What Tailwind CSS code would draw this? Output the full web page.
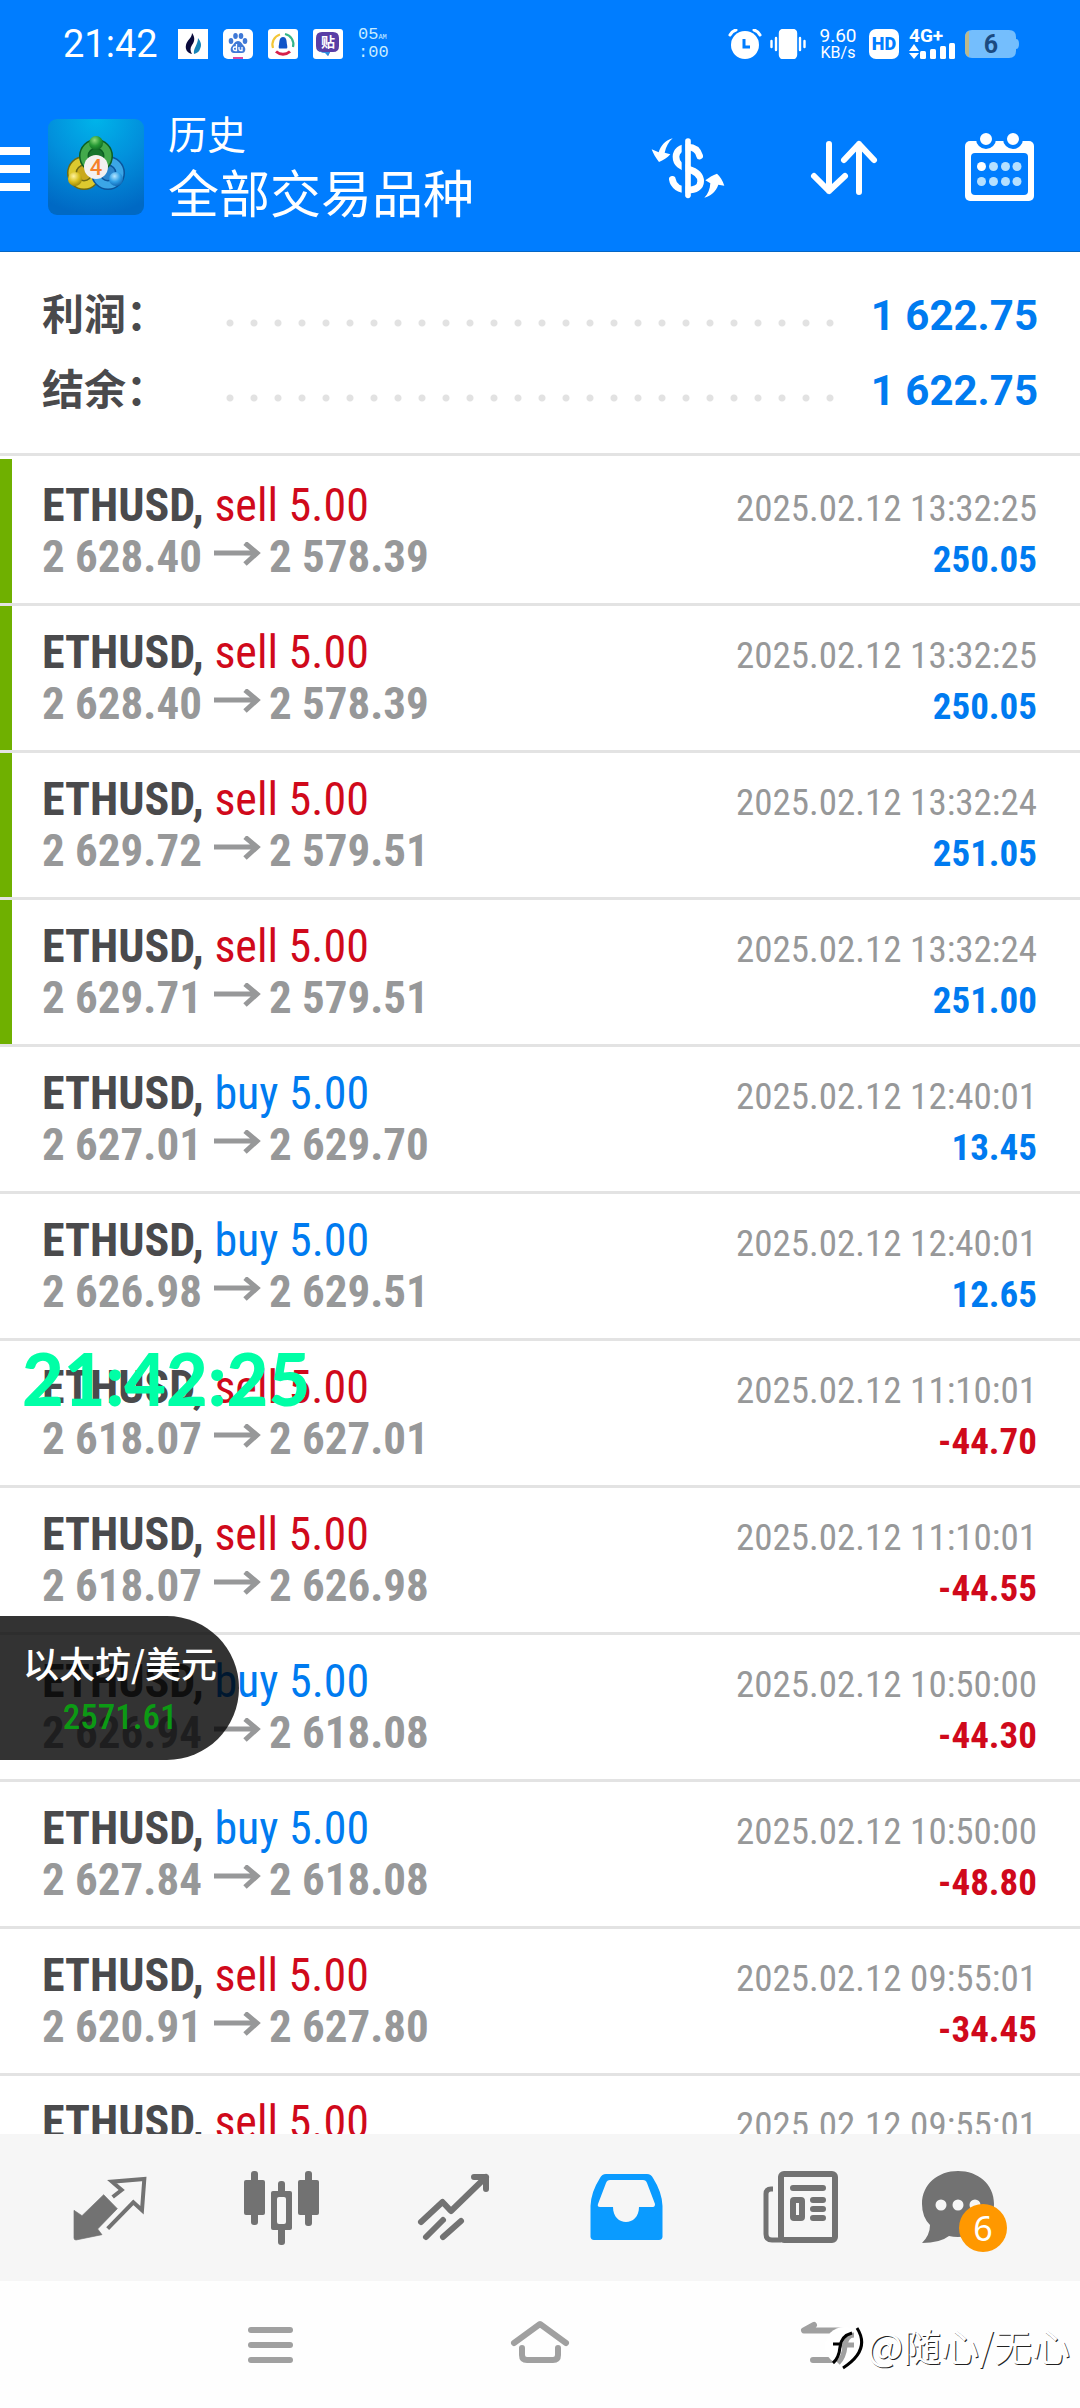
<!DOCTYPE html>
<html lang="zh-CN">
<head>
<meta charset="utf-8">
<meta name="viewport" content="width=device-width, initial-scale=1">
<title>历史 - 全部交易品种</title>
<script src="https://cdn.jsdelivr.net/npm/@tailwindcss/browser@4"></script>
</head>
<body class="relative flex h-screen flex-col overflow-hidden bg-white font-['Roboto','Noto_Sans_CJK_SC',sans-serif] text-[#4a4a4c]">

<header class="shrink-0 border-b border-[#0566c4] bg-[#007dff] text-white">
  <!-- System status bar -->
  <div class="flex h-[83px] items-center justify-between pt-1 pr-[60px] pl-[63px]">
    <div class="flex items-center gap-[15px]">
      <span class="mr-1 w-[96px] text-[38px] leading-[40px]">21:42</span>
      <svg class="size-[30px]" viewBox="0 0 30 30"><rect width="30" height="30" fill="#fff"/><path d="M14 4c3 4 3 8 0 12-2 3-2 6 0 9-5-1-7-5-6-9 1-5 6-7 6-12z" fill="#0b0b3b"/><path d="M20 9c3 4 4 7 2 11-1 3-3 4-6 5-1-6 4-9 4-16z" fill="#1684b8"/></svg>
      <svg class="size-[30px]" viewBox="0 0 30 30"><rect width="30" height="30" rx="5" fill="#fff"/><g fill="#3f78d6"><ellipse cx="8" cy="12" rx="2.300" ry="3"/><ellipse cx="12.500" cy="7" rx="2.300" ry="3"/><ellipse cx="18" cy="7" rx="2.300" ry="3"/><ellipse cx="22" cy="12" rx="2.300" ry="3"/><path d="M15 12c3 0 4 3 6 5s2 7-2 7H11c-4 0-4-5-2-7s3-5 6-5z"/></g><path d="M13.500 15v6.500h-1.500a1.500 1.500 0 0 1 0-3.500h1.500M16 18v2q0 1.500 1.500 1.500H19V18" fill="none" stroke="#fff" stroke-width="1.300"/><path d="M10 28h10v2H10z" fill="#d94aa0"/></svg>
      <svg class="size-[30px]" viewBox="0 0 30 30"><rect width="30" height="30" rx="3" fill="#fff"/><g fill="none" stroke-width="2.200"><path d="M5 19A10.500 10.500 0 0 1 12 5.500" stroke="#f3c636"/><path d="M17 5a10.500 10.500 0 0 1 8 13" stroke="#35b58a"/><path d="M8 22.500a10.500 10.500 0 0 0 14 0" stroke="#d6204b" stroke-width="3"/></g><path d="M15 8c4 0 3.500 5 4 7.500s.5 4-.5 4h-7c-1 0-1-2-.5-4S11 8 15 8z" fill="#1155c8"/></svg>
      <svg class="size-[30px]" viewBox="0 0 30 30"><rect width="30" height="30" rx="3" fill="#fff"/><path d="M9 3h11q6 0 6 6v8q0 6-6 6h-3l-2 4-2-4h-4q-6 0-6-6V9q0-6 6-6z" fill="#5a3ea6"/><path d="M5 19q1 5 7 5l3 3 2-4H9q-3-1-4-4z" fill="#2f8fe0"/><text x="15" y="18" text-anchor="middle" font-size="14" font-weight="700" fill="#fff" font-family="Noto Sans CJK SC">贴</text></svg>
      <span class="grid font-['Liberation_Mono',monospace] text-[17px] leading-[15px] text-[#c8ecff]"><span>05<small class="text-[7px]">AM</small></span><span>:00</span></span>
    </div>
    <div class="flex items-center">
      <svg class="h-[30px] w-[34px]" viewBox="0 0 34 30"><circle cx="17" cy="16" r="14" fill="#fff"/><path d="M2 6q2-4 6-5M32 6q-2-4-6-5" fill="none" stroke="#fff" stroke-width="3" stroke-linecap="round"/><path d="M16 10v8h6" fill="none" stroke="#007dff" stroke-width="3"/></svg>
      <svg class="ml-2 h-[30px] w-[36px]" viewBox="0 0 36 30" stroke="#fff" stroke-width="2.400" stroke-linecap="round"><rect x="10" y="1" width="16" height="28" rx="3" fill="#fff"/><path d="M6 9v12M1.500 12v6M30 9v12M34.500 12v6"/></svg>
      <span class="ml-3 grid w-[40px] text-center text-[19px] leading-[17px]"><span>9.60</span><span class="text-[16px]">KB/s</span></span>
      <span class="ml-[11px] grid size-[30px] place-items-center rounded-[7px] bg-white text-[18px] leading-none font-black text-[#007dff]">HD</span>
      <span class="ml-[10px] grid w-[48px]"><b class="text-[19px] leading-[15px]">4G+</b>
        <svg class="h-[17px] w-[48px]" viewBox="0 0 48 17" fill="#fff"><path d="M0 8l5-7 5 7zM0 10l5 6 5-6z"/><rect x="11" y="8" width="6" height="8" rx="1.500"/><rect x="21" y="6" width="6" height="10" rx="1.500"/><rect x="31" y="3" width="6" height="13" rx="1.500"/><rect x="40" y="0" width="6" height="16" rx="1.500"/></svg></span>
      <svg class="ml-2 h-[28px] w-[55px]" viewBox="0 0 55 28"><path d="M7 0h37q7 0 7 7v2q3 0 3 5t-3 5v2q0 7-7 7H7q-7 0-7-7V7q0-7 7-7z" fill="#74befd"/><path d="M4 1v26q-4-2-4-6V7q0-4 4-6z" fill="#bdb98c"/><text x="26" y="23" text-anchor="middle" font-size="25" font-weight="700" fill="#1b4a80" font-family="Roboto">6</text></svg>
    </div>
  </div>
  <!-- App bar -->
  <div class="flex h-[168px] items-center justify-between pr-[32px]">
    <div class="flex items-center">
      <button aria-label="菜单" class="grid w-[30px] gap-[10px] pt-1"><span class="h-2 bg-white"></span><span class="h-2 bg-white"></span><span class="h-2 bg-white"></span></button>
      <svg class="ml-[18px] size-24" viewBox="0 0 96 96" role="img" aria-label="MetaTrader 4">
        <defs>
          <radialGradient id="sky" cx=".5" cy="0" r="1"><stop offset="0" stop-color="#00b4ea"/><stop offset=".5" stop-color="#0290dc"/><stop offset="1" stop-color="#0069c4"/></radialGradient>
          <radialGradient id="gr" cx=".4" cy=".3" r=".8"><stop offset="0" stop-color="#8fdc7c"/><stop offset=".5" stop-color="#269a35"/><stop offset="1" stop-color="#0a5f1e"/></radialGradient>
          <radialGradient id="ye" cx=".4" cy=".3" r=".8"><stop offset="0" stop-color="#fff3a0"/><stop offset=".5" stop-color="#d9c01e"/><stop offset="1" stop-color="#8d7a06"/></radialGradient>
          <radialGradient id="bl" cx=".4" cy=".3" r=".8"><stop offset="0" stop-color="#b5e6ff"/><stop offset=".5" stop-color="#2f9fe6"/><stop offset="1" stop-color="#0a5aa8"/></radialGradient>
        </defs>
        <rect width="96" height="96" rx="9" fill="url(#sky)"/>
        <circle cx="36" cy="54" r="12" fill="#c9a91c" stroke="#6f6a10" stroke-width="10"/><circle cx="36" cy="54" r="12" fill="none" stroke="#dcc92f" stroke-width="7"/>
        <circle cx="60" cy="54" r="12" fill="#2c86cc" stroke="#0b559c" stroke-width="10"/><circle cx="60" cy="54" r="12" fill="none" stroke="#3ba6e6" stroke-width="7"/>
        <circle cx="48" cy="37" r="12" fill="#17752c" stroke="#0c5f22" stroke-width="10"/><circle cx="48" cy="37" r="12" fill="none" stroke="#43a94b" stroke-width="7"/>
        <circle cx="48" cy="24" r="7" fill="url(#gr)"/><circle cx="27" cy="60" r="7" fill="url(#ye)"/><circle cx="68" cy="60" r="7" fill="url(#bl)"/>
        <circle cx="48" cy="48" r="12" fill="#f3f1f0"/>
        <text x="48" y="56" text-anchor="middle" font-size="22" font-weight="500" fill="#f5812a" font-family="Roboto">4</text>
      </svg>
      <div class="ml-6 pt-1">
        <p class="text-[39px] leading-[54px]">历史</p>
        <h1 class="text-[51px] leading-[66px]">全部交易品种</h1>
      </div>
    </div>
    <div class="flex gap-[60px] pt-[2px]">
      <button aria-label="货币"><svg class="size-24" viewBox="2 0 96 96"><g transform="scale(.3333)" fill="#fff">
        <path d="M104 55C80 62 68 78 62 97L41 88C46 101 53 114 63 126 76 122 88 113 97 103L80 98C84 80 92 65 104 55Z"/>
        <path d="M199 233C218 228 234 215 241 194L259 197C254 182 246 168 237 161 225 165 212 173 202 181L217 190C216 208 210 222 199 233Z"/>
        <path d="M185 108C180 90 168 81 150 81 128 81 114 94 114 110 114 132 130 140 150 147 174 154 188 164 188 184 188 202 172 210 150 210 124 210 106 198 103 178" fill="none" stroke="#fff" stroke-width="20" stroke-linecap="round"/>
        <path d="M137 45V240" stroke="#007dff" stroke-width="12"/><path d="M150 63V226" stroke="#fff" stroke-width="17" stroke-linecap="round"/></g></svg></button>
      <button aria-label="排序"><svg class="size-24" viewBox="0 0 96 96" fill="none" stroke="#fff" stroke-width="6" stroke-linecap="round" stroke-linejoin="round"><path d="M33 24V71M18 56L33 71 49 56M63 72V24M48 40L63 24 78 40"/></svg></button>
      <button aria-label="日期"><svg class="size-24" viewBox="0 0 96 96"><rect x="13" y="21" width="69" height="60" rx="5" fill="#fff"/><rect x="19" y="33" width="57" height="42" rx="4" fill="#007dff"/><g fill="#fff" stroke="#007dff" stroke-width="4"><circle cx="34" cy="19" r="8"/><circle cx="61" cy="19" r="8"/></g><g fill="#b5e0ff"><circle cx="29.500" cy="46.500" r="4.500" fill="#fff"/><circle cx="41.500" cy="46.500" r="4.500"/><circle cx="53.500" cy="46.500" r="4.500"/><circle cx="65" cy="46.500" r="4.500"/><circle cx="29.500" cy="61.500" r="4.500"/><circle cx="41.500" cy="61.500" r="4.500"/><circle cx="53.500" cy="61.500" r="4.500"/><circle cx="65" cy="61.500" r="4.500"/></g></svg></button>
    </div>
  </div>
</header>

<!-- Totals -->
<dl class="shrink-0 border-b-[3px] border-[#e3e3e3] px-[42px] pt-[26px] pb-[25px]">
  <div class="flex h-[75px] items-start">
    <dt class="w-[176px] font-['Noto_Sans_CJK_SC',sans-serif] text-[42px] leading-[68px] font-bold">利润：</dt>
    <dd class="flex flex-1 items-center justify-between text-[42px] leading-[75px] font-bold text-[#007bf0]"><span class="mt-[14px] h-2 w-[624px] bg-[radial-gradient(circle,#e2e2e2_3px,transparent_4px)] bg-[length:24px_8px]"></span>1 622.75</dd>
  </div>
  <div class="flex h-[75px] items-start">
    <dt class="w-[176px] font-['Noto_Sans_CJK_SC',sans-serif] text-[42px] leading-[68px] font-bold">结余：</dt>
    <dd class="flex flex-1 items-center justify-between text-[42px] leading-[75px] font-bold text-[#007bf0]"><span class="mt-[14px] h-2 w-[624px] bg-[radial-gradient(circle,#e2e2e2_3px,transparent_4px)] bg-[length:24px_8px]"></span>1 622.75</dd>
  </div>
</dl>

<!-- Closed deals -->
<ul id="deals" class="min-h-0 flex-1 overflow-hidden pt-[3px] font-['Roboto_Condensed','Roboto',sans-serif]"></ul>

<!-- App tabs -->
<nav class="grid h-[147px] shrink-0 grid-cols-6 place-items-center bg-[#f6f6f6] px-6">
  <button aria-label="行情"><svg class="size-24" viewBox="2 0 96 96"><g transform="scale(.3333)" fill="#727272"><path d="M131 104L172 146 113 207 126 224 48 240Q42 240 42 234V151L66 167Z" stroke="#727272" stroke-width="2" stroke-linejoin="round"/><path d="M158 111L185 90 156 65 253 57 246 151 220 127 143 206" fill="none" stroke="#727272" stroke-width="12"/></g></svg></button>
  <button aria-label="图表"><svg class="size-24" viewBox="0 0 96 96" fill="#727272"><rect x="17" y="11" width="7" height="54" rx="3"/><rect x="10" y="20" width="21" height="35" rx="2"/><rect x="44" y="21" width="7" height="64" rx="3"/><rect x="37" y="31" width="21" height="39" rx="2"/><rect x="43" y="37" width="9" height="27" rx="2" fill="#f6f6f6"/><rect x="71" y="11" width="7" height="55" rx="3"/><rect x="64" y="20" width="21" height="35" rx="2"/></svg></button>
  <button aria-label="交易"><svg class="size-24" viewBox="0 0 96 96" fill="none" stroke="#727272" stroke-width="6" stroke-linecap="round" stroke-linejoin="round"><path d="M15 62L36.500 42 45 51 80 17M68 17H80V29M20 77L37 60M37 77L55 61"/></svg></button>
  <button aria-label="历史" aria-current="page"><svg class="size-24" viewBox="0 0 96 96"><path fill="#0a9bff" fill-rule="evenodd" d="M28 14H69Q73 14 75 18 84 32 84.500 46V77Q84 80 81 80H16Q13 80 12.500 77V46Q13 32 22 18 24 14 28 14ZM32 20H65Q68 20 69 23L77 44Q77 47 75 47H61C61 67 35 67 35 47H22Q19 47 20 44L28 23Q29 20 32 20Z"/></svg></button>
  <button aria-label="新闻"><svg class="size-24" viewBox="0 0 96 96" fill="none" stroke="#727272" stroke-width="6" stroke-linecap="round"><rect x="31" y="14" width="54" height="66" rx="3"/><path d="M23 29H21Q16 29 16 34V74Q16 80 22 80H31" stroke-width="5" stroke-linecap="butt"/><path d="M43 28H73M63 40H73M63 49H73M63 58H73"/><rect x="43" y="40" width="9" height="18" rx="1"/></svg></button>
  <button aria-label="消息" class="relative"><svg class="size-24" viewBox="0 0 96 96"><path d="M36 11C56 11 72 24 72 44S56 77 36 77Q31 77 27 76 18 83 0 83 8 75 8 65 0 57 0 44C0 24 16 11 36 11Z" fill="#727272"/><g fill="#f6f6f6"><circle cx="19" cy="45" r="5.500"/><circle cx="36" cy="45" r="5.500"/><circle cx="53" cy="45" r="5.500"/></g></svg><span class="absolute top-[44px] left-[37px] grid size-12 place-items-center rounded-full bg-[#ff9800] font-['Noto_Sans',sans-serif] text-[34px] leading-none text-white">6</span></button>
</nav>

<!-- System navigation -->
<nav class="grid h-[127px] shrink-0 grid-cols-3 place-items-center bg-[#fefefe] px-[135px]">
  <button aria-label="最近任务" class="grid w-[45px] gap-[9px]"><span class="h-[6px] rounded-full bg-[#a0a0a0]"></span><span class="h-[6px] rounded-full bg-[#a0a0a0]"></span><span class="h-[6px] rounded-full bg-[#a0a0a0]"></span></button>
  <button aria-label="主屏幕"><svg class="h-[54px] w-[60px]" viewBox="0 0 60 54" fill="none" stroke="#a0a0a0" stroke-width="6" stroke-linecap="round" stroke-linejoin="round"><path d="M4 25L30 6 56 25M12 30V37Q12 42 17 42H43Q48 42 48 37V30"/></svg></button>
  <button aria-label="返回"><svg class="h-[54px] w-[90px]" viewBox="0 0 90 54" fill="none" stroke="#a0a0a0" stroke-width="6" stroke-linecap="round" stroke-linejoin="round"><path d="M49 7L39 12.500H76Q87 12.500 87 27T76 42H48"/></svg></button>
</nav>

<!-- Floating clock -->
<time class="absolute top-[1336px] left-[22px] font-['Lato',sans-serif] text-[72px] leading-[84px] font-black text-[#00ffa6]">21:42:25</time>

<!-- Floating quote -->
<aside class="absolute top-[1616px] left-0 grid h-36 w-[239px] content-center justify-items-center gap-2 rounded-r-full bg-black/80 pt-[2px] pr-[24px] pl-[23px] text-center">
  <p class="font-['Noto_Sans_CJK_SC',sans-serif] text-[36px] leading-[50px] font-medium whitespace-nowrap text-white">以太坊/美元</p>
  <p class="font-['Roboto_Condensed','Roboto',sans-serif] text-[35px] leading-[46px] font-medium text-[#0c9a14]">2571.61</p>
</aside>

<!-- Author mark -->
<p class="absolute right-[10px] bottom-[38px] flex items-center font-['Noto_Sans_CJK_SC',sans-serif] text-[38px] leading-[50px] text-white [text-shadow:1px_1px_0_#222]">
  <svg class="h-[50px] w-[44px]" viewBox="0 0 44 50"><circle cx="21" cy="26" r="19" fill="#fff"/><path d="M15 43Q21 37 22 26T31 15M16 25H31" fill="none" stroke="#a0a0a0" stroke-width="5"/><path d="M10 43Q16 38 17 27T29 13M10 24H19M34 8Q48 30 20 48" fill="none" stroke="#000" stroke-width="3"/></svg>@随心/无心
</p>

<script>
const deals = [
  ['sell', '2 628.40', '2 578.39', '13:32:25', '250.05', true],
  ['sell', '2 628.40', '2 578.39', '13:32:25', '250.05', true],
  ['sell', '2 629.72', '2 579.51', '13:32:24', '251.05', true],
  ['sell', '2 629.71', '2 579.51', '13:32:24', '251.00', true],
  ['buy', '2 627.01', '2 629.70', '12:40:01', '13.45', false],
  ['buy', '2 626.98', '2 629.51', '12:40:01', '12.65', false],
  ['sell', '2 618.07', '2 627.01', '11:10:01', '-44.70', false],
  ['sell', '2 618.07', '2 626.98', '11:10:01', '-44.55', false],
  ['buy', '2 626.94', '2 618.08', '10:50:00', '-44.30', false],
  ['buy', '2 627.84', '2 618.08', '10:50:00', '-48.80', false],
  ['sell', '2 620.91', '2 627.80', '09:55:01', '-34.45', false],
  ['sell', '2 620.91', '2 627.80', '09:55:01', '-34.45', false],
];
const arrow = '<svg class="mr-2 ml-3 inline h-[30px] w-[47px] align-baseline" viewBox="0 0 47 30" fill="none" stroke="#979899" stroke-width="5" aria-label="→"><path d="M0 11H43M31 1L43 11 31 22"/></svg>';
document.getElementById('deals').innerHTML = deals.map(([side, open, close, time, profit, target]) => `
  <li class="h-[147px] border-b-[3px] border-[#e3e3e3]">
    <div class="${target ? 'h-full border-l-[12px] border-[#6fb000] pt-[21px] pr-[43px] pl-[30px]' : 'h-full pt-[21px] pr-[43px] pl-[42px]'}">
      <div class="flex h-[51px] items-baseline justify-between leading-[51px]">
        <span class="text-[46px]"><b>ETHUSD,</b> <span class="${side === 'sell' ? 'text-[#d0091b]' : 'text-[#007bf0]'}">${side} 5.00</span></span>
        <time class="text-[37px] text-[#979899]">2025.02.12 ${time}</time>
      </div>
      <div class="flex h-[51px] items-baseline justify-between leading-[51px] font-bold">
        <span class="text-[45px] text-[#979899]">${open}${arrow}${close}</span>
        <span class="${profit < 0 ? 'text-[37px] text-[#d0091b]' : 'text-[37px] text-[#007bf0]'}">${profit}</span>
      </div>
    </div>
  </li>`).join('');
</script>
</body>
</html>
